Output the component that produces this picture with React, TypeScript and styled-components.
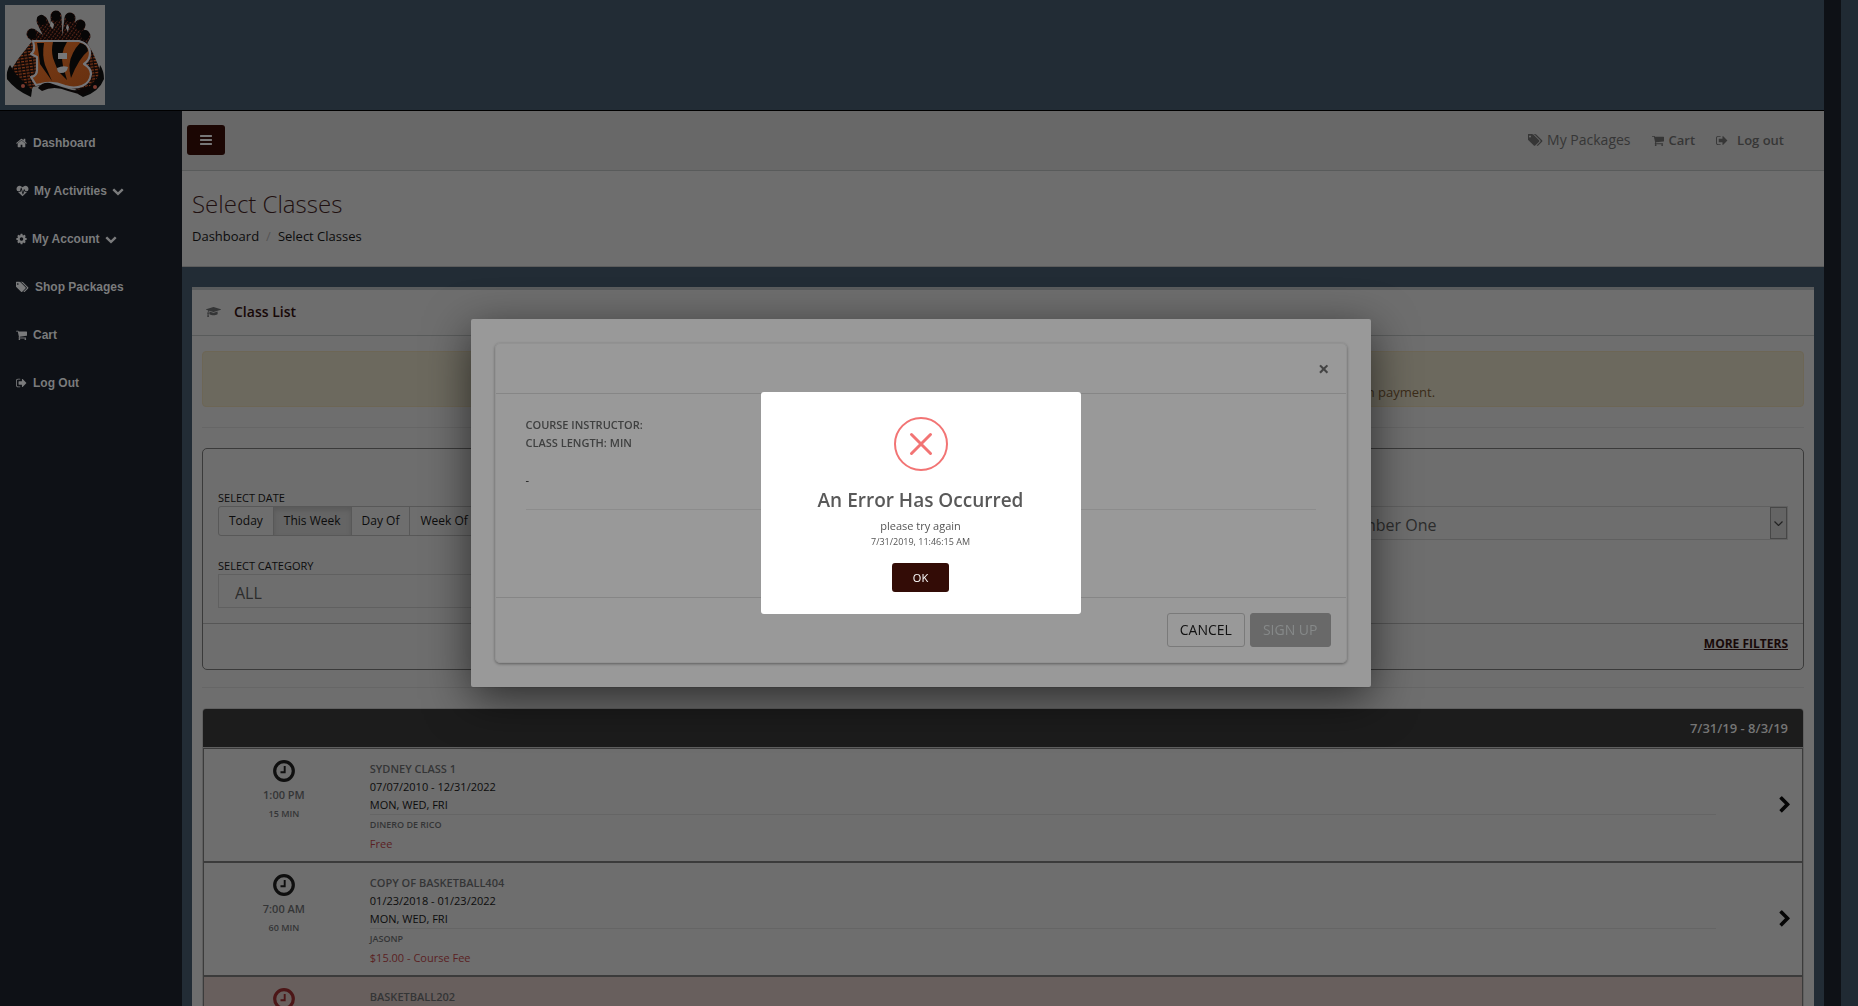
import React from "react";
import styled, { createGlobalStyle, css } from "styled-components";

const c = {
  slate: "#222c35",
  ink: "#0e1116",
  paper: "#6e6e6e",
  bar: "#686868",
  line: "#5f5f5f",
  maroon: "#170808",
  text: "#0c0c0c",
  muted: "#343536",
  red: "#5a2123",
};

const GlobalStyle = createGlobalStyle`
  *, *::before, *::after { box-sizing: border-box; }
  body {
    margin: 0;
    background: ${c.slate};
    color: ${c.text};
    font: 13px/18px "Open Sans", sans-serif;
  }
  h1, h2, h3, p, ul, ol { margin: 0; padding: 0; font-weight: inherit; }
  ul, ol { list-style: none; }
  button, select { font-family: inherit; }
  a { color: inherit; text-decoration: none; }
`;

/* ---------- icons ---------- */

const Svg = styled.svg<{ $h: number; $w?: number }>`
  display: block;
  flex: none;
  height: ${(p) => p.$h}px;
  width: ${(p) => p.$w ?? p.$h}px;
  fill: currentColor;
`;

const paths = {
  home: "M1472 992v480q0 26-19 45t-45 19h-384v-384h-256v384h-384q-26 0-45-19t-19-45v-480q0-1 .5-3t.5-3l575-474 575 474q1 2 1 6zm223-69l-62 74q-8 9-21 11h-3q-13 0-21-7l-692-577-692 577q-12 8-24 7-13-2-21-11l-62-74q-8-10-7-23.5t11-21.5l719-599q32-26 76-26t76 26l244 204v-195q0-14 9-23t23-9h192q14 0 23 9t9 23v408l219 182q10 8 11 21.5t-7 23.5z",
  heart: "M1280 1024h305q-5 6-10 10.500t-9 7.500l-3 4-623 600q-18 18-44 18t-44-18l-624-602q-5-2-21-20h369q22 0 39.500-13.500t22.500-34.500l70-281 190 667q6 20 23 33t39 13q21 0 38-13t23-33l146-485 56 112q18 35 57 35zm512-428q0 145-103 300h-369l-111-221q-8-17-25.500-27t-36.500-8q-45 5-56 46l-129 430-196-686q-6-20-23.500-33t-39.500-13-39 13.500-22 34.500l-116 464h-423q-103-155-103-300 0-220 127-344t351-124q62 0 126.500 21.500t120 58 95.500 68.500 76 68q36-36 76-68t95.500-68.500 120-58 126.500-21.500q224 0 351 124t127 344z",
  cog: "M1152 896q0-106-75-181t-181-75-181 75-75 181 75 181 181 75 181-75 75-181zm512-109v222q0 12-8 23t-20 13l-185 28q-19 54-39 91 35 50 107 138 10 12 10 25t-9 23q-27 37-99 108t-94 71q-12 0-26-9l-138-108q-44 23-91 38-16 136-29 186-7 28-36 28h-222q-14 0-24.500-8.500t-11.500-21.500l-28-184q-49-16-90-37l-141 107q-10 9-25 9-14 0-25-11-126-114-165-168-7-10-7-23 0-12 8-23 15-21 51-66.500t54-70.500q-27-50-41-99l-183-27q-13-2-21-12.500t-8-23.500v-222q0-12 8-23t19-13l186-28q14-46 39-92-40-57-107-138-10-12-10-24 0-10 9-23 26-36 98.500-107.500t94.500-71.500q13 0 26 10l138 107q44-23 91-38 16-136 29-186 7-28 36-28h222q14 0 24.500 8.500t11.500 21.500l28 184q49 16 90 37l142-107q9-9 24-9 13 0 25 10 129 119 165 170 7 8 7 22 0 12-8 23-15 21-51 66.500t-54 70.500q26 50 41 98l183 28q13 2 21 12.500t8 23.500z",
  tags: "M384 448q0-53-37.500-90.500t-90.500-37.500-90.500 37.500-37.500 90.500 37.500 90.500 90.500 37.500 90.500-37.500 37.500-90.500zm1067 576q0 53-37 90l-491 492q-39 37-91 37-53 0-90-37l-715-716q-38-37-64.500-101t-26.500-117v-416q0-52 38-90t90-38h416q53 0 117 26.500t102 64.500l715 714q37 39 37 91zm384 0q0 53-37 90l-491 492q-39 37-91 37-36 0-59-14t-53-45l470-470q37-37 37-90 0-52-37-91l-715-714q-38-38-102-64.500t-117-26.500h224q53 0 117 26.500t102 64.500l715 714q37 39 37 91z",
  cart: "M704 1536q0 52-38 90t-90 38-90-38-38-90 38-90 90-38 90 38 38 90zm896 0q0 52-38 90t-90 38-90-38-38-90 38-90 90-38 90 38 38 90zm128-1088v512q0 24-16.500 42.500t-40.500 21.500l-1044 122q13 60 13 70 0 16-24 64h920q26 0 45 19t19 45-19 45-45 19h-1024q-26 0-45-19t-19-45q0-11 8-31.500t16-36 21.500-40 15.500-29.500l-177-823h-204q-26 0-45-19t-19-45 19-45 45-19h256q16 0 28.500 6.500t19.500 15.500 13 24.500 8 26 5.500 29.500 4.500 26h1201q26 0 45 19t19 45z",
  signOut: "M704 1440q0 4 1 20t.5 26.500-3 23.500-10 19.500-20.500 6.500h-320q-119 0-203.500-84.500t-84.500-203.500v-704q0-119 84.500-203.500t203.500-84.500h320q13 0 22.500 9.500t9.500 22.500q0 4 1 20t.5 26.500-3 23.500-10 19.500-20.500 6.500h-320q-66 0-113 47t-47 113v704q0 66 47 113t113 47h312l11.500 1 11.500 3 8 5.500 7 9 2 13.500zm928-544q0 26-19 45l-544 544q-19 19-45 19t-45-19-19-45v-288h-448q-26 0-45-19t-19-45v-384q0-26 19-45t45-19h448v-288q0-26 19-45t45-19 45 19l544 544q19 19 19 45z",
  down: "M1683 808l-742 741q-19 19-45 19t-45-19l-742-741q-19-19-19-45.500t19-45.500l166-165q19-19 45-19t45 19l531 531 531-531q19-19 45-19t45 19l166 165q19 19 19 45.500t-19 45.500z",
  right: "M1363 877l-742 742q-19 19-45 19t-45-19l-166-166q-19-19-19-45t19-45l531-531-531-531q-19-19-19-45t19-45l166-166q19-19 45-19t45 19l742 742q19 19 19 45t-19 45z",
  bars: "M1664 1344v128q0 26-19 45t-45 19h-1408q-26 0-45-19t-19-45v-128q0-26 19-45t45-19h1408q26 0 45 19t19 45zm0-512v128q0 26-19 45t-45 19h-1408q-26 0-45-19t-19-45v-128q0-26 19-45t45-19h1408q26 0 45 19t19 45zm0-512v128q0 26-19 45t-45 19h-1408q-26 0-45-19t-19-45v-128q0-26 19-45t45-19h1408q26 0 45 19t19 45z",
  cap: "M1774 836l18 316q4 69-82 128t-235 93.500-323 34.500-323-34.500-235-93.500-82-128l18-316 574 181q22 7 48 7t48-7zm530-324q0 23-22 31l-1120 352q-4 1-10 1t-10-1l-652-206q-43 34-71 111.500t-34 178.500q63 36 63 109 0 69-58 107l58 433q2 14-8 25-9 11-24 11h-192q-15 0-24-11-10-11-8-25l58-433q-58-38-58-107 0-73 65-111 11-207 98-330l-333-104q-22-8-22-31t22-31l1120-352q4-1 10-1t10 1l1120 352q22 8 22 31z",
};

type IconName = keyof typeof paths;
const boxes: Partial<Record<IconName, string>> = {
  home: "64 0 1664 1792",
  cog: "128 0 1536 1792",
  signOut: "64 0 1664 1792",
  cart: "64 0 1664 1792",
  tags: "0 0 1920 1792",
  cap: "0 0 2304 1792",
};

const Icon = ({ name, h, w }: { name: IconName; h: number; w?: number }) => (
  <Svg $h={h} $w={w} viewBox={boxes[name] ?? "0 0 1792 1792"} aria-hidden="true">
    <path d={paths[name]} />
  </Svg>
);

const Clock = () => (
  <Svg $h={22} viewBox="0 0 22 22" aria-hidden="true">
    <circle cx="11" cy="11" r="9.300" fill="none" stroke="currentColor" strokeWidth="3.200" />
    <path d="M11.700 6v6.300H7.500" fill="none" stroke="currentColor" strokeWidth="1.900" />
  </Svg>
);

const fingers = "M27 29L38 37M37 16L48 38M51 11L52 38M65 13L62 38M75 20L68 38M80 31L74 42";
const fingerTips = "M27 28v2M36 14l1 2M51 10v2M65 12v1M76 19l-1 2M80 29v2";

const TeamLogo = () => (
  <Svg $h={100} viewBox="0 0 100 100" role="img" aria-label="Bengals gloves">
    <defs>
      <pattern id="mesh" width="4" height="3" patternUnits="userSpaceOnUse" patternTransform="rotate(-8)">
        <rect width="4" height="3" fill="#0e0807" />
        <rect x="0" y="1" width="3" height="1.300" fill="#7a3517" />
      </pattern>
      <pattern id="weave" width="3" height="3" patternUnits="userSpaceOnUse" patternTransform="rotate(35)">
        <rect width="3" height="3" fill="#0a0606" />
        <rect width="1.200" height="2" fill="#552417" />
      </pattern>
      <linearGradient id="amber" x1="0" y1="0" x2="1" y2="1">
        <stop offset="0" stopColor="#7a3c17" />
        <stop offset="1" stopColor="#67300f" />
      </linearGradient>
    </defs>
    <rect width="100" height="100" fill="#6b6b6b" />
    <path fill="url(#mesh)" d="M28 35L13 54 4 68 2 74l22 16 4-8 20-4 22 6 10 6 17-13-1-10-8-19-8-14z" />
    <path fill="#080808" d="M5 60q-4 6-3 14 8 11 24 18l1-7-8-8-9-9zM95 60q4 6 4 14-5 13-21 18l-5-3 12-8 8-9z" />
    <path fill="none" stroke="url(#weave)" strokeWidth="11" strokeLinecap="round" d={fingers} />
    <path fill="none" stroke="#070606" strokeWidth="8" strokeLinecap="round" d={fingerTips} />
    <path fill="#777" d="M46 16l3 3-1 5-3-3zM62 19l2 3-1 5-2-4z" />
    <path
      fill="url(#amber)"
      stroke="#75767a"
      strokeWidth="2.200"
      strokeLinejoin="round"
      d="M28 36h46q11 3 11 12 0 7-6 11 7 4 7 10-1 9-9 12-8 3-17 0-12-5-24-2l-5 1-5-8q6-1 6-7V52l-6-3q5-3 2-13z"
    />
    <path fill="#070707" d="M32 38h7q-2 12 1 22l7 16-12-17q-1-10-3-21zM48 37h14q-7 11-4 24l4 14-9-9-5-13q-2-8 0-16zM75 38q7 1 8 8-9 7-17 27-4-14 2-25 3-6 7-10z" />
    <path fill="#777779" d="M53 48h9v6h-9zM52 63q6-3 11-1-1 6-7 6-4 0-4-5z" />
    <path fill="#0a0606" d="M33 83q4-6 12-5 14 5 22 7 8 1 16-4l2 5-8 4-14-4q-14-6-26 0z" />
    <circle cx="18" cy="81" r="2" fill="#7b3a30" />
    <circle cx="90" cy="82" r="2" fill="#7b3a30" />
  </Svg>
);

/* ---------- page frame ---------- */

const Frame = styled.div`
  display: flex;
  height: 100vh;
  overflow: hidden;
`;
const Site = styled.div`
  flex: 1;
  min-width: 0;
  display: flex;
  flex-direction: column;
`;
const Gutter = styled.div<{ $dark?: boolean }>`
  flex: 0 0 17px;
  background: ${(p) => (p.$dark ? c.ink : "#202a33")};
`;
const Banner = styled.header`
  flex: none;
  padding: 5px;
  border-bottom: 1px solid #000;
`;
const Columns = styled.div`
  flex: 1;
  min-height: 0;
  display: flex;
`;
const Sidebar = styled.nav`
  flex: 0 0 182px;
  padding: 8px 16px;
  background: ${c.ink};
`;
const NavLink = styled.a<{ $gap: number }>`
  display: flex;
  align-items: center;
  gap: ${(p) => p.$gap}px;
  height: 48px;
  color: #7a7b7c;
  font: bold 12px/16px "Liberation Sans", Arial, sans-serif;
`;
const Content = styled.div`
  flex: 1;
  min-width: 0;
`;
const TopBar = styled.div`
  display: flex;
  align-items: center;
  justify-content: space-between;
  height: 60px;
  padding: 0 40px 1px 5px;
  background: ${c.bar};
  border-bottom: 1px solid #595b5b;
`;
const MenuButton = styled.button`
  display: flex;
  align-items: center;
  justify-content: center;
  width: 38px;
  height: 30px;
  padding: 0;
  border: 0;
  border-radius: 3px;
  background: #1b0603;
  color: #777;
`;
const Links = styled.div`
  display: flex;
  align-items: center;
  gap: 21px;
`;
const TopLink = styled.a<{ $gap: number; $big?: boolean }>`
  display: flex;
  align-items: center;
  gap: ${(p) => p.$gap}px;
  color: #363636;
  font-size: ${(p) => (p.$big ? 14 : 13)}px;
  font-weight: ${(p) => (p.$big ? 400 : 600)};
`;
const Heading = styled.div`
  height: 96px;
  padding: 19px 10px;
  background: ${c.paper};
  border-bottom: 1px solid #5c5c5c;
`;
const PageTitle = styled.h1`
  color: #1f1010;
  font-size: 24px;
  font-weight: 300;
  line-height: 28px;
`;
const Crumbs = styled.ol`
  display: flex;
  gap: 7px;
  padding-top: 9px;
`;
const Slash = styled.li`
  color: #555;
`;

/* ---------- class list panel ---------- */

const Panel = styled.section`
  margin: 20px 10px 0;
  background: ${c.paper};
  border-top: 3px solid #5a5c5d;
`;
const PanelHead = styled.div`
  display: flex;
  align-items: center;
  gap: 13px;
  height: 46px;
  padding: 0 14px 2px;
  border-bottom: 1px solid #595b5b;
  color: ${c.muted};
`;
const PanelTitle = styled.h2`
  color: ${c.maroon};
  font-size: 14px;
  font-weight: 600;
`;
const PanelBody = styled.div`
  padding: 15px 10px;
`;
const Notice = styled.div`
  height: 56px;
  padding: 31px 16px 0;
  border: 1px solid #6d6655;
  border-radius: 4px;
  background: #6c695e;
  color: #3b2c19;
  text-align: center;
  line-height: 18px;
`;
const Rule = styled.hr<{ $top: number }>`
  height: 1px;
  margin: ${(p) => p.$top}px 0 20px;
  border: 0;
  background: #666;
`;
const Filters = styled.form`
  border: 1px solid #3a3a3a;
  border-radius: 5px;
`;
const FilterGrid = styled.div`
  display: grid;
  grid-template-columns: 33fr 33fr 34fr;
  gap: 17px 0;
  padding: 40px 15px 15px;
`;
const Field = styled.div<{ $column?: number }>`
  grid-column: ${(p) => p.$column ?? 1};
  display: flex;
  flex-direction: column;
  align-items: stretch;
  min-width: 0;
`;
const Label = styled.label`
  font-size: 11px;
  line-height: 17px;
`;
const Segments = styled.div`
  display: flex;
  height: 30px;
`;
const Segment = styled.button<{ $on?: boolean }>`
  padding: 0 10px;
  margin-right: -1px;
  border: 1px solid #585858;
  background: ${c.paper};
  color: ${c.text};
  font-size: 12px;
  line-height: 18px;
  &:first-child { border-radius: 3px 0 0 3px; }
  ${(p) =>
    p.$on &&
    css`
      background: #656565;
      box-shadow: inset 0 3px 5px rgba(0, 0, 0, 0.12);
    `}
`;
const SelectBox = styled.div`
  position: relative;
`;
const Select = styled.select`
  display: block;
  width: 100%;
  height: 34px;
  padding: 4px 16px 0;
  appearance: none;
  border: 1px solid #606060;
  border-radius: 0;
  background: ${c.paper};
  color: #2c2c2c;
  font-size: 16px;
`;
const SelectArrow = styled.span`
  position: absolute;
  top: 1px;
  right: 1px;
  bottom: 1px;
  display: flex;
  align-items: center;
  justify-content: center;
  width: 17px;
  border: 1px solid #474747;
  background: #646464;
  pointer-events: none;
`;
const FilterFoot = styled.div`
  display: flex;
  justify-content: flex-end;
  height: 46px;
  padding: 11px 15px;
  border-top: 1px solid #565656;
`;
const MoreLink = styled.a`
  color: ${c.maroon};
  font-size: 12px;
  font-weight: 700;
  text-decoration: underline;
`;
const Schedule = styled.div`
  border: 1px solid ${c.line};
  border-radius: 4px;
`;
const ScheduleHead = styled.h3`
  height: 39px;
  padding: 10px 15px;
  border-bottom: 1px solid ${c.line};
  border-radius: 3px 3px 0 0;
  background: #1c1c1c;
  color: #757575;
  font-size: 13px;
  font-weight: 600;
  text-align: right;
`;
const Row = styled.li<{ $full?: boolean }>`
  display: flex;
  height: 114px;
  border: 1px solid #3b3b3b;
  background: ${(p) => (p.$full ? "#685f5d" : c.paper)};
`;
const TimeCell = styled.div<{ $full?: boolean }>`
  flex: 0 0 10%;
  display: flex;
  flex-direction: column;
  align-items: center;
  padding-top: 11px;
  color: ${(p) => (p.$full ? "#4c1617" : "#0f0f0f")};
`;
const Time = styled.span`
  margin-top: 4px;
  color: ${c.muted};
  font-size: 11px;
  font-weight: 600;
`;
const Small = styled.span`
  color: ${c.muted};
  font-size: 9px;
  font-weight: 600;
  line-height: 20px;
`;
const Info = styled.div`
  flex: 1;
  display: flex;
  flex-direction: column;
  margin-left: 6px;
  padding-top: 11px;
  font-size: 11px;
  line-height: 18px;
`;
const Name = styled.strong`
  color: ${c.muted};
  font-weight: 600;
`;
const Days = styled.span`
  border-bottom: 1px solid #656565;
`;
const Price = styled.span`
  color: ${c.red};
`;
const Go = styled.button`
  flex: 0 0 86px;
  display: flex;
  align-items: center;
  justify-content: flex-end;
  padding: 0 8px;
  border: 0;
  background: none;
  color: #050505;
`;

/* ---------- dialogs ---------- */

const Layer = styled.div`
  position: fixed;
  inset: 0 17px 0 0;
  display: flex;
  align-items: center;
  justify-content: center;
`;
const Modal = styled.div`
  width: 900px;
  max-width: 100%;
  padding: 24px;
  border-radius: 2px;
  background: #999;
  box-shadow: 0 12px 45px rgba(0, 0, 0, 0.6);
`;
const Card = styled.div`
  border: 1px solid #929292;
  border-radius: 5px;
  box-shadow: 0 1px 3px rgba(0, 0, 0, 0.4);
`;
const CardHead = styled.div`
  display: flex;
  justify-content: flex-end;
  align-items: center;
  height: 50px;
  padding: 0 16px;
  border-bottom: 1px solid #868686;
`;
const Close = styled.button`
  padding: 0;
  border: 0;
  background: none;
  color: #444;
  font-size: 20px;
  font-weight: 700;
  line-height: 20px;
`;
const CardBody = styled.div`
  height: 204px;
  padding: 22px 30px;
  border-bottom: 1px solid #868686;
`;
const Detail = styled.p`
  color: #3f4040;
  font-size: 11px;
  font-weight: 600;
`;
const Dates = styled.p`
  height: 39px;
  margin-top: 19px;
  border-bottom: 1px solid #8c8c8c;
  font-size: 11px;
`;
const CardFoot = styled.div`
  display: flex;
  justify-content: flex-end;
  gap: 5px;
  padding: 15px;
`;
const Button = styled.button`
  height: 34px;
  padding: 0 12px 2px;
  border: 1px solid #7a7a7a;
  border-radius: 3px;
  background: #999;
  color: #111;
  font-size: 14px;
  &:disabled {
    border-color: #696969;
    background: #696969;
    color: #868989;
  }
`;
const Alert = styled.div`
  display: flex;
  flex-direction: column;
  align-items: center;
  width: 320px;
  height: 222px;
  padding: 25px 20px 22px;
  border-radius: 3px;
  background: #fff;
  color: #555;
`;
const AlertTitle = styled.h2`
  margin-top: 16px;
  color: #595959;
  font-size: 19px;
  font-weight: 600;
  line-height: 26px;
`;
const AlertText = styled.p<{ $small?: boolean }>`
  padding-top: ${(p) => (p.$small ? 0 : 5)}px;
  font-size: ${(p) => (p.$small ? 9 : 11)}px;
  line-height: 16px;
`;
const Confirm = styled.button`
  width: 57px;
  height: 29px;
  margin-top: 13px;
  padding: 0;
  border: 0;
  border-radius: 3px;
  background: #330c06;
  color: #fff;
  font-size: 11px;
`;

const nav: { icon: IconName; label: string; w: number; gap: number; more?: boolean }[] = [
  { icon: "home", label: "Dashboard", w: 11, gap: 6 },
  { icon: "heart", label: "My Activities", w: 13, gap: 5, more: true },
  { icon: "cog", label: "My Account", w: 11, gap: 5, more: true },
  { icon: "tags", label: "Shop Packages", w: 13, gap: 6 },
  { icon: "cart", label: "Cart", w: 11, gap: 6 },
  { icon: "signOut", label: "Log Out", w: 11, gap: 6 },
];

const classes = [
  { time: "1:00 PM", length: "15 MIN", name: "SYDNEY CLASS 1", dates: "07/07/2010 - 12/31/2022", days: "MON, WED, FRI", coach: "DINERO DE RICO", price: "Free" },
  { time: "7:00 AM", length: "60 MIN", name: "COPY OF BASKETBALL404", dates: "01/23/2018 - 01/23/2022", days: "MON, WED, FRI", coach: "JASONP", price: "$15.00 - Course Fee" },
];

const Drop = ({ id, value }: { id: string; value: string }) => (
  <SelectBox>
    <Select id={id} defaultValue={value}>
      <option>{value}</option>
    </Select>
    <SelectArrow>
      <Svg $h={5} $w={9} viewBox="0 0 9 5" aria-hidden="true">
        <path d="M.5.5l4 4 4-4" fill="none" stroke="#222" strokeWidth="1.200" />
      </Svg>
    </SelectArrow>
  </SelectBox>
);

export default function App() {
  return (
    <>
      <GlobalStyle />
      <Frame>
        <Site>
          <Banner>
            <TeamLogo />
          </Banner>
          <Columns>
            <Sidebar aria-label="Main">
              {nav.map((n) => (
                <NavLink key={n.label} href="#" $gap={n.gap}>
                  <Icon name={n.icon} h={12} w={n.w} />
                  {n.label}
                  {n.more && <Icon name="down" h={12} />}
                </NavLink>
              ))}
            </Sidebar>
            <Content>
              <TopBar>
                <MenuButton type="button" aria-label="Toggle menu">
                  <Icon name="bars" h={14} />
                </MenuButton>
                <Links>
                  <TopLink href="#" $gap={4} $big>
                    <Icon name="tags" h={14} w={15} />
                    My Packages
                  </TopLink>
                  <TopLink href="#" $gap={5}>
                    <Icon name="cart" h={13} w={12} />
                    Cart
                  </TopLink>
                  <TopLink href="#" $gap={9}>
                    <Icon name="signOut" h={13} w={12} />
                    Log out
                  </TopLink>
                </Links>
              </TopBar>
              <Heading>
                <PageTitle>Select Classes</PageTitle>
                <Crumbs>
                  <li>Dashboard</li>
                  <Slash>/</Slash>
                  <li>Select Classes</li>
                </Crumbs>
              </Heading>
              <Panel>
                <PanelHead>
                  <Icon name="cap" h={12} w={15} />
                  <PanelTitle>Class List</PanelTitle>
                </PanelHead>
                <PanelBody>
                  <Notice>
                    Select a class from the list below to see details, then press the sign up button. Your place is only held once we receive the registration payment.
                  </Notice>
                  <Rule $top={20} />
                  <Filters>
                    <FilterGrid>
                      <Field>
                        <Label as="span">SELECT DATE</Label>
                        <Segments>
                          <Segment type="button">Today</Segment>
                          <Segment type="button" $on>This Week</Segment>
                          <Segment type="button">Day Of</Segment>
                          <Segment type="button">Week Of</Segment>
                        </Segments>
                      </Field>
                      <Field $column={3}>
                        <Label htmlFor="location">SELECT LOCATION</Label>
                        <Drop id="location" value="Location Number One" />
                      </Field>
                      <Field>
                        <Label htmlFor="category">SELECT CATEGORY</Label>
                        <Drop id="category" value="ALL" />
                      </Field>
                    </FilterGrid>
                    <FilterFoot>
                      <MoreLink href="#">MORE FILTERS</MoreLink>
                    </FilterFoot>
                  </Filters>
                  <Rule $top={17} />
                  <Schedule>
                    <ScheduleHead>7/31/19 - 8/3/19</ScheduleHead>
                    <ul>
                      {classes.map((k) => (
                        <Row key={k.name}>
                          <TimeCell>
                            <Clock />
                            <Time>{k.time}</Time>
                            <Small>{k.length}</Small>
                          </TimeCell>
                          <Info>
                            <Name>{k.name}</Name>
                            <span>{k.dates}</span>
                            <Days>{k.days}</Days>
                            <Small>{k.coach}</Small>
                            <Price>{k.price}</Price>
                          </Info>
                          <Go type="button" aria-label={"Open " + k.name}>
                            <Icon name="right" h={18} />
                          </Go>
                        </Row>
                      ))}
                      <Row $full>
                        <TimeCell $full>
                          <Clock />
                        </TimeCell>
                        <Info>
                          <Name>BASKETBALL202</Name>
                        </Info>
                      </Row>
                    </ul>
                  </Schedule>
                </PanelBody>
              </Panel>
            </Content>
          </Columns>
        </Site>
        <Gutter $dark />
        <Gutter />
      </Frame>

      <Layer>
        <Modal role="dialog" aria-label="Class sign up">
          <Card>
            <CardHead>
              <Close type="button" aria-label="Close">×</Close>
            </CardHead>
            <CardBody>
              <Detail>COURSE INSTRUCTOR:</Detail>
              <Detail>CLASS LENGTH: MIN</Detail>
              <Dates>-</Dates>
            </CardBody>
            <CardFoot>
              <Button type="button">CANCEL</Button>
              <Button type="button" disabled>SIGN UP</Button>
            </CardFoot>
          </Card>
        </Modal>
      </Layer>

      <Layer>
        <Alert role="alertdialog" aria-labelledby="alert-title">
          <Svg $h={54} viewBox="0 0 54 54" aria-hidden="true">
            <g fill="none" stroke="#f27474" strokeLinecap="round">
              <circle cx="27" cy="27" r="26" strokeWidth="2" />
              <path d="M17.500 17.500l19 19M36.500 17.500l-19 19" strokeWidth="3" />
            </g>
          </Svg>
          <AlertTitle id="alert-title">An Error Has Occurred</AlertTitle>
          <AlertText>please try again</AlertText>
          <AlertText $small>7/31/2019, 11:46:15 AM</AlertText>
          <Confirm type="button">OK</Confirm>
        </Alert>
      </Layer>
    </>
  );
}
